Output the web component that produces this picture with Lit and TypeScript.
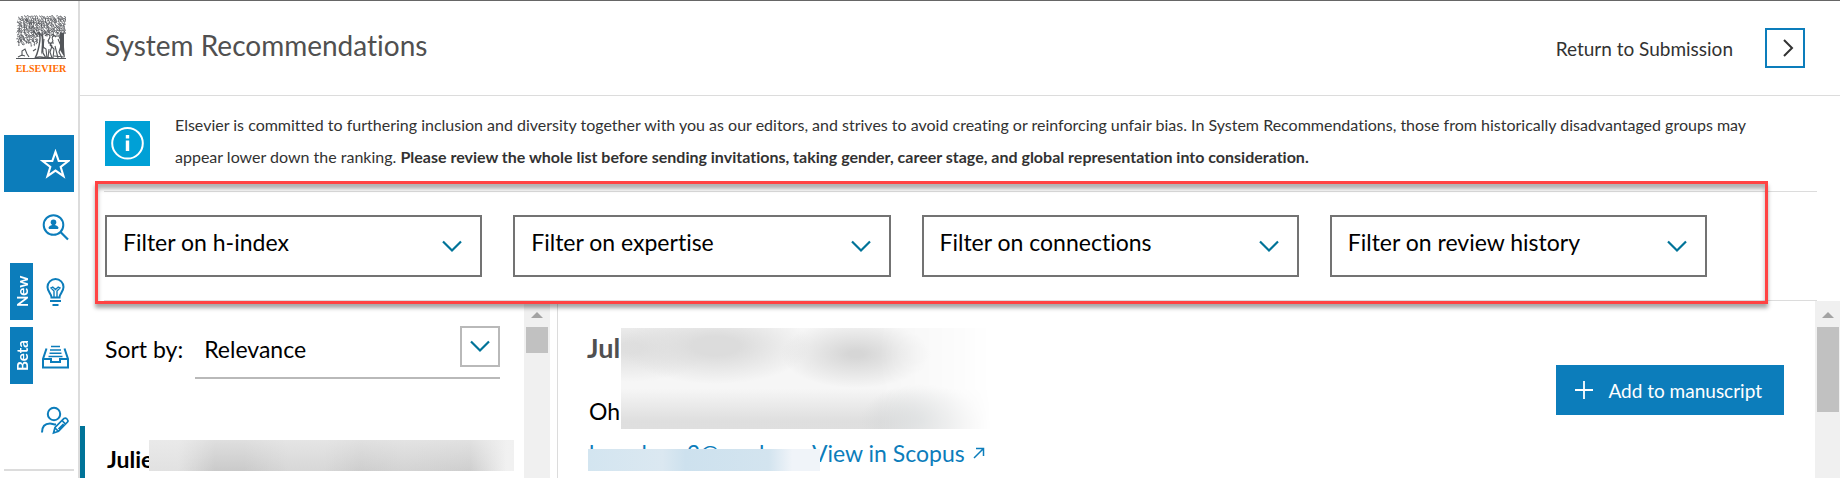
import { LitElement, html, css, svg } from "lit";
import { customElement, property } from "lit/decorators.js";

const chevronDown = html`<svg class="chevron" viewBox="0 0 20 13" width="20" height="13" aria-hidden="true">
  <path d="M1 1.500 10 10.500 19 1.500" fill="none" stroke="#007398" stroke-width="2.200" />
</svg>`;

/* Foliage of the logo: rows of small curls, with a fixed pseudo-random sequence. */
function foliage() {
  let seed = 7;
  const rnd = () => {
    seed = (seed * 16807) % 2147483647;
    return seed / 2147483647;
  };
  let d = "";
  for (let y = 1; y < 27; y += 2.3) {
    const from = y < 4 ? 2 : 0.5;
    const to = y < 18 ? 48 : y < 21 ? 24 : 19;
    for (let x = from; x < to; x += 2.5) {
      const a = x + rnd() * 1.2;
      const b = y + rnd() * 1.2;
      d += `M${a.toFixed(1)} ${b.toFixed(1)}q${(rnd() * 3 - 0.5).toFixed(1)} ${(rnd() * -3).toFixed(1)} 2 ${(rnd() * 2).toFixed(1)}t${(rnd() * 2 - 1.4).toFixed(1)} 1.3`;
    }
  }
  return d;
}

const logoTree = svg`
  <path d=${foliage()} fill="none" stroke="#53565a" stroke-width=".8" />
  <path d="M23 17c2 5 1 9 0 14s-2 9-4 12M26 18c1 7 0 15 1 20l3 5M21 20l-4-4M20 43c3-2 6-1 9 0" fill="none" stroke="#53565a" stroke-width="1.4" />
  <path d="M29 21c2-3 5-2 5 1l-2 4 4 5-2 6 2 6M40 22c-3-3-5 0-3 4l-3 4 4 4-1 9M28 24l-1 8 3 2 1 9M42 24l3 7-2 6 3 6M36 19l3 2 4 0 2 5M32 28l6 0M39 31l3 12M33 34l-1 9" fill="none" stroke="#53565a" stroke-width="1.1" />
  <path d="M27 18l-2 22 3-8zM44 18h4l0 14 1 11-5-8z" fill="#53565a" />
  <path d="M0 43.500h50M2 42l4-2 3 1M6 41l0-5 3-2 2 5 2 3M17 36l3-2M30 42l6 1M38 41l10 1" fill="none" stroke="#53565a" stroke-width="1.100" />`;

const icons: Record<string, unknown> = {
  star: svg`<path d="M15.500 2.800l3.200 9.200h9.600l-7.600 6 2.800 9.200-8-5.600-8 5.600 2.800-9.200-7.600-6h9.600z" fill="none" stroke="#fff" stroke-width="2.100" />`,
  search: svg`<circle cx="13.500" cy="12" r="9.800" fill="none" stroke="currentColor" stroke-width="2" />
    <path d="M20.500 19l7.500 7.500" stroke="currentColor" stroke-width="2.200" />
    <circle cx="13.500" cy="9.300" r="2.800" fill="currentColor" />
    <path d="M8.800 16v-1.800q0-1.400 3.200-2.200h3q3.200.800 3.200 2.200V16z" fill="currentColor" />`,
  bulb: svg`<path d="M11.500 20.500c0-4-4-5.500-4-10.500a8 8 0 0 1 16 0c0 5-4 6.500-4 10.500z" fill="none" stroke="currentColor" stroke-width="2" />
    <path d="M14 20v-6l-3-3 1.800-1 2.700 2.500L18.200 10l1.800 1-3 3v6" fill="none" stroke="currentColor" stroke-width="1.400" />
    <path d="M10 24h11M12.500 28h6" stroke="currentColor" stroke-width="2" />`,
  tray: svg`<path d="M6.500 7.500 3 18v8.500h25V18L24.500 7.500M3 18h8v3h9v-3h8" fill="none" stroke="currentColor" stroke-width="2" />
    <path d="M11 5.500h9M10 9h11M9.500 12.300h12M8.500 15.500h14" stroke="currentColor" stroke-width="1.600" />`,
  reviewer: svg`<circle cx="14" cy="9" r="6.200" fill="none" stroke="currentColor" stroke-width="2" />
    <path d="M2 27.500c0-7 4-9 8-9 2 0 3.500 1 6 1" fill="none" stroke="currentColor" stroke-width="2" />
    <path d="M13.500 28l1.500-5.500 9-9q1.500-1 3 .500t.500 3l-9 9.300zM22 15.500l3.800 3.800M15 23l3.500 3.300M18.500 24l5-5" fill="none" stroke="currentColor" stroke-width="1.700" />`,
};

const navItems = [
  { icon: "star", label: "Recommendations", tag: "", active: true },
  { icon: "search", label: "Search reviewers", tag: "", active: false },
  { icon: "bulb", label: "Suggestions", tag: "New", active: false },
  { icon: "tray", label: "Shortlist", tag: "Beta", active: false },
  { icon: "reviewer", label: "Add reviewer", tag: "", active: false },
];

@customElement("side-nav")
export class SideNav extends LitElement {
  static styles = css`
    :host {
      display: flex;
      flex-direction: column;
      box-sizing: border-box;
      width: 80px;
      flex: none;
      padding: 14px 4px 0;
      border-right: 2px solid #dcdcdc;
      color: #0c7dbb;
    }
    .logo {
      display: flex;
      flex-direction: column;
      align-items: center;
      height: 120px;
      padding-left: 4px;
      color: #ff6c00;
      font: 700 10px/12px "Liberation Serif", serif;
    }
    .logo-tree {
      display: block;
      margin-bottom: 3px;
    }
    nav {
      display: flex;
      flex-direction: column;
      gap: 7px;
      padding-bottom: 21px;
      border-bottom: 2px solid #dcdcdc;
    }
    .item {
      display: flex;
      align-items: center;
      justify-content: flex-end;
      gap: 7px;
      height: 57px;
      padding-right: 4px;
      color: inherit;
      text-decoration: none;
    }
    .active {
      background: #0c7dbb;
    }
    .tag {
      display: flex;
      align-items: center;
      justify-content: center;
      width: 23px;
      height: 57px;
      background: #0c7dbb;
      color: #fff;
      font-size: 15px;
      font-weight: 700;
      writing-mode: vertical-rl;
      rotate: 180deg;
    }
  `;
  render() {
    return html`
      <div class="logo">
        <svg class="logo-tree" viewBox="0 0 50 45" width="50" height="45" aria-hidden="true">${logoTree}</svg>
        ELSEVIER
      </div>
      <nav>
        ${navItems.map(
          (i) => html`<a class="item ${i.active ? "active" : ""}" href="#" aria-label=${i.label}>
            ${i.tag ? html`<span class="tag">${i.tag}</span>` : ""}
            <svg viewBox="0 0 30 30" width="30" height="30" aria-hidden="true">${icons[i.icon]}</svg>
          </a>`
        )}
      </nav>
    `;
  }
}

@customElement("filter-select")
export class FilterSelect extends LitElement {
  @property() label = "";
  static styles = css`
    :host {
      display: grid;
      align-items: center;
    }
    select,
    .chevron {
      grid-area: 1 / 1;
    }
    select {
      appearance: none;
      width: 100%;
      height: 62px;
      padding: 0 56px 8px 16px;
      border: 2px solid #737373;
      border-radius: 0;
      background: #fff;
      color: #000;
      font: inherit;
    }
    .chevron {
      justify-self: end;
      margin-right: 20px;
      pointer-events: none;
    }
  `;
  render() {
    return html`<select aria-label=${this.label}>
        <option>${this.label}</option>
      </select>
      ${chevronDown}`;
  }
}

@customElement("scroll-track")
export class ScrollTrack extends LitElement {
  static styles = css`
    :host {
      display: flex;
      flex-direction: column;
      align-items: center;
      flex: none;
      width: 26px;
      background: #f0f0f0;
    }
    .arrow {
      margin: 11px 0 9px;
    }
    .thumb {
      width: 22px;
      background: #c1c1c1;
      height: var(--thumb);
    }
  `;
  render() {
    return html`<svg class="arrow" viewBox="0 0 12 6" width="12" height="6" aria-hidden="true"><path d="M0 6 6 0l6 6z" fill="#a3a3a3" /></svg>
      <div class="thumb"></div>`;
  }
}

@customElement("app-root")
export class AppRoot extends LitElement {
  static styles = css`
    :host {
      display: flex;
      box-sizing: border-box;
      height: 100vh;
      overflow: hidden;
      border-top: 1px solid #666;
      background: #fff;
      color: #000;
      font-family: Lato, "Noto Sans", sans-serif;
      font-size: 23px;
      font-variant-ligatures: none;
    }
    main {
      display: flex;
      flex-direction: column;
      flex: 1;
      min-width: 0;
    }
    header {
      display: flex;
      align-items: center;
      justify-content: space-between;
      height: 94px;
      padding: 0 35px 0 25px;
      border-bottom: 1px solid #dcdcdc;
    }
    h1 {
      margin: 0;
      padding-bottom: 6px;
      color: #505050;
      font-size: 28px;
      font-weight: 400;
    }
    .return {
      display: flex;
      align-items: center;
      gap: 32px;
      color: #323232;
      font-size: 19px;
    }
    .return-button {
      display: grid;
      place-items: center end;
      width: 40px;
      height: 40px;
      padding: 0 9px 0 0;
      border: 2px solid #0c7dbb;
      background: #fff;
    }
    .notice {
      display: flex;
      align-items: center;
      gap: 25px;
      height: 95px;
      padding: 0 48px 0 25px;
    }
    .notice-icon {
      flex: none;
      background: #00a0d6;
    }
    .notice p {
      margin: 0;
      padding-bottom: 6px;
      color: #323232;
      font-size: 16px;
      line-height: 32px;
    }
    .filters {
      position: relative;
      z-index: 1;
      display: grid;
      grid-template-columns: repeat(4, 1fr);
      gap: 31px;
      margin: 0 23px 0 24px;
      padding: 23px 110px 23px 1px;
      border: solid #dcdcdc;
      border-width: 1px 0;
    }
    .highlight {
      position: absolute;
      inset: -11px 49px -4px -9px;
      border: 3px solid #ff4343;
      box-shadow: 0 4px 4px rgb(0 0 0 / 35%), inset 0 5px 4px rgb(0 0 0 / 30%);
      pointer-events: none;
    }
    .panes {
      display: flex;
      flex: 1;
      min-height: 0;
    }
    .list {
      flex: none;
      width: 444px;
      overflow: hidden;
    }
    .sort {
      display: flex;
      align-items: baseline;
      gap: 12px;
      height: 125px;
      box-sizing: border-box;
      padding: 14px 24px 0 25px;
    }
    .sort-box {
      display: grid;
      flex: 1;
      border-bottom: 2px solid #b9b9b9;
    }
    .sort-box select,
    .sort-arrow {
      grid-area: 1 / 1;
    }
    .sort-box select {
      appearance: none;
      height: 62px;
      padding: 6px 48px 0 9px;
      border: 0;
      background: none;
      color: #000;
      font: inherit;
    }
    .sort-arrow {
      display: grid;
      place-items: center;
      place-self: center end;
      width: 36px;
      height: 37px;
      border: 2px solid #b9b9b9;
      pointer-events: none;
    }
    .person {
      position: relative;
      padding: 13px 22px;
      border-left: 5px solid #007398;
      font-weight: 700;
      line-height: 40px;
    }
    .blur {
      position: absolute;
    }
    .blur-list {
      inset: 14px 10px auto 64px;
      height: 31px;
      background: linear-gradient(#ececec99, #c4c4c422), linear-gradient(90deg, #e6e6e6 0 8%, #cbcbcb 18% 26%, #dadada 38% 48%, #cfcfcf 58%, #d6d6d6 70%, #d0d0d0 88%, #f8f8f8 98%);
    }
    .detail {
      position: relative;
      flex: 1;
      margin-left: 7px;
      padding: 22px 31px 0 29px;
      border-left: 1px solid #dcdcdc;
    }
    .detail h2 {
      margin: 0 0 22px;
      color: #505050;
      font-size: 27px;
      line-height: 50px;
    }
    .detail p {
      margin: 0 0 10px 2px;
      line-height: 32px;
    }
    .links {
      display: flex;
      align-items: center;
      gap: 8px;
      color: #0c7dbb;
    }
    .links a {
      color: inherit;
      text-decoration: none;
    }
    .email {
      display: flex;
      justify-content: space-between;
      width: 215px;
    }
    .blur-name {
      top: 27px;
      left: 63px;
      width: 370px;
      height: 101px;
      background:
        radial-gradient(ellipse 75px 34px at 235px 26px, #d6d6d6 10%, #d6d6d600 100%),
        radial-gradient(ellipse 95px 38px at 95px 18px, #dcdcdc 25%, #dcdcdc00 100%),
        radial-gradient(ellipse 80px 34px at 10px 20px, #dfdfdf 15%, #dfdfdf00 100%),
        radial-gradient(ellipse 60px 36px at 300px 92px, #d3d6d7, #d3d6d700 100%),
        linear-gradient(#fff0 60%, #d9d9d9cc 92%),
        #f6f6f6;
      mask-image: linear-gradient(90deg, #000 70%, #0007 88%, transparent);
    }
    .blur-links {
      top: 148px;
      left: 30px;
      width: 232px;
      height: 22px;
      background: linear-gradient(90deg, #d3e5f0, #dbe8f1 32%, #cde1ee 42%, #d3e4ef 78%, #f0f4f9 88%);
    }
    .add {
      position: absolute;
      top: 64px;
      right: 31px;
      display: flex;
      align-items: center;
      gap: 15px;
      height: 50px;
      padding: 0 22px 0 19px;
      border: 0;
      background: #0c7dbb;
      color: #fff;
      font: inherit;
      font-size: 19px;
    }
    .list-scroll {
      --thumb: 26px;
    }
    .detail-scroll {
      --thumb: 85px;
      width: 25px;
    }
  `;
  render() {
    return html`
      <side-nav></side-nav>
      <main>
        <header>
          <h1>System Recommendations</h1>
          <div class="return">
            <span id="return-label">Return to Submission</span>
            <button class="return-button" aria-labelledby="return-label">
              <svg viewBox="0 0 11 18" width="11" height="18" aria-hidden="true"><path d="M1 1l8 8-8 8" fill="none" stroke="#323232" stroke-width="2" /></svg>
            </button>
          </div>
        </header>
        <section class="notice">
          <svg class="notice-icon" viewBox="0 0 45 45" width="45" height="45" aria-hidden="true">
            <circle cx="22.500" cy="22.300" r="15.300" fill="none" stroke="#fff" stroke-width="2" />
            <path d="M22.500 14v3.500M22.500 19.500V30" stroke="#fff" stroke-width="3.400" />
          </svg>
          <p>
            Elsevier is committed to furthering inclusion and diversity together with you as our editors, and strives to avoid creating or
            reinforcing unfair bias. In System Recommendations, those from historically disadvantaged groups may appear lower down the ranking.
            <b>Please review the whole list before sending invitations, taking gender, career stage, and global representation into consideration.</b>
          </p>
        </section>
        <section class="filters">
          ${["h-index", "expertise", "connections", "review history"].map(
            (f) => html`<filter-select label="Filter on ${f}"></filter-select>`
          )}
          <div class="highlight"></div>
        </section>
        <div class="panes">
          <section class="list">
            <div class="sort">
              <label for="sort">Sort by:</label>
              <div class="sort-box">
                <select id="sort">
                  <option>Relevance</option>
                </select>
                <span class="sort-arrow">${chevronDown}</span>
              </div>
            </div>
            <article class="person">
              Julie
              <div class="blur blur-list"></div>
            </article>
          </section>
          <scroll-track class="list-scroll"></scroll-track>
          <section class="detail">
            <h2>Jul</h2>
            <p>Oh</p>
            <p class="links">
              <a class="email" href="#"><span>h</span><span>l</span><span>3@</span><span>l</span><span></span></a>
              <a href="#">View in Scopus</a>
              <svg viewBox="0 0 12 12" width="12" height="12" aria-hidden="true"><path d="M1 11 10.500 1.500M3 1.500h7.500V9" fill="none" stroke="currentColor" stroke-width="1.500" /></svg>
            </p>
            <div class="blur blur-name"></div>
            <div class="blur blur-links"></div>
            <button class="add">
              <svg viewBox="0 0 18 18" width="18" height="18" aria-hidden="true"><path d="M9 0v18M0 9h18" stroke="#fff" stroke-width="1.800" /></svg>
              Add to manuscript
            </button>
          </section>
          <scroll-track class="detail-scroll"></scroll-track>
        </div>
      </main>
    `;
  }
}
